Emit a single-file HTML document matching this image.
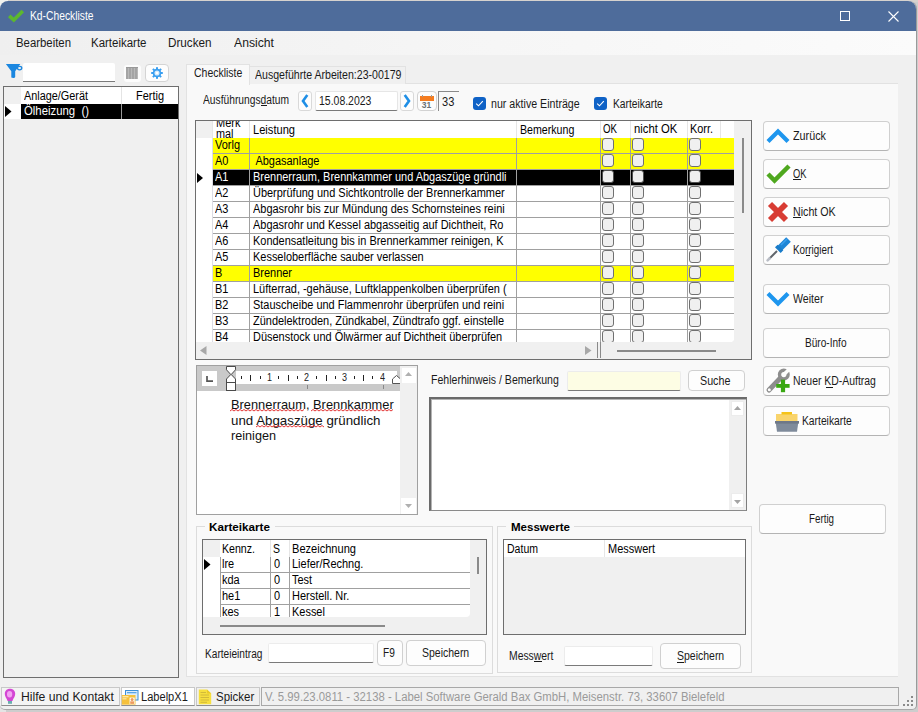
<!DOCTYPE html><html><head><meta charset="utf-8"><style>
*{margin:0;padding:0;box-sizing:border-box}
html,body{width:918px;height:712px;overflow:hidden;background:#e9e9e9;font-family:"Liberation Sans",sans-serif}
div{position:absolute}
.t{white-space:pre}
svg{position:absolute;overflow:visible}
</style></head><body>
<div style="left:0;top:0;width:918px;height:712px;background:#cdcdcd"></div>
<div style="left:0;top:0;width:918px;height:2px;background:#d6d2ce"></div>
<div style="left:0;top:0;width:8px;height:10px;background:#f2f2ee"></div>
<div style="left:0;top:690px;width:6px;height:22px;background:#e4e4e4"></div>
<div style="left:0px;top:1px;width:917px;height:709px;background:#f0f0f0;border-radius:8px 8px 5px 5px;border-right:1px solid #9a9a9a;border-bottom:1px solid #a8a8a8;overflow:hidden"></div>
<div style="left:0px;top:1px;width:916px;height:30px;background:#4e6c9b;border-radius:8px 8px 0 0"></div>
<svg style="left:8px;top:9px" width="16" height="13" viewBox="0 0 16 13"><path d="M1.2 6.8 L5.8 11 L14.8 2" fill="none" stroke="#5cb82e" stroke-width="3.6" stroke-linejoin="miter"/></svg>
<div class="t" style="left:29.50px;top:8.44px;font-size:12px;line-height:16.80px;color:#ffffff;font-weight:400;transform:scaleX(0.8576);transform-origin:0 0;">Kd-Checkliste</div>
<div style="left:840px;top:11px;width:10px;height:10px;border:1px solid #fff"></div>
<svg style="left:888px;top:11px" width="11" height="11" viewBox="0 0 11 11"><path d="M0.5 0.5 L10.5 10.5 M10.5 0.5 L0.5 10.5" stroke="#fff" stroke-width="1.1"/></svg>
<div style="left:0px;top:31px;width:916px;height:24px;background:linear-gradient(90deg,#efefef 0%,#f5f5f5 45%,#fbfbfb 100%)"></div>
<div class="t" style="left:15.80px;top:35.04px;font-size:12px;line-height:16.80px;color:#1a1a1a;font-weight:400;transform:scaleX(0.9475);transform-origin:0 0;">Bearbeiten</div>
<div class="t" style="left:90.50px;top:35.04px;font-size:12px;line-height:16.80px;color:#1a1a1a;font-weight:400;transform:scaleX(0.9566);transform-origin:0 0;">Karteikarte</div>
<div class="t" style="left:168.20px;top:35.04px;font-size:12px;line-height:16.80px;color:#1a1a1a;font-weight:400;transform:scaleX(0.9760);transform-origin:0 0;">Drucken</div>
<div class="t" style="left:234.00px;top:35.04px;font-size:12px;line-height:16.80px;color:#1a1a1a;font-weight:400;transform:scaleX(1.0163);transform-origin:0 0;">Ansicht</div>
<svg style="left:4px;top:62px" width="20" height="18" viewBox="0 0 20 18"><path d="M1.9 1.9 H16.3 L11.2 9.3 V15 Q10.8 16.2 9.2 16 L7.3 15.6 V9.3 Z" fill="#1b87e0"/><ellipse cx="15.6" cy="6.1" rx="2.2" ry="1.7" fill="none" stroke="#1b87e0" stroke-width="1.3"/></svg>
<div style="left:23px;top:63px;width:92px;height:19px;background:#fff;border-bottom:1px solid #7a7a7a;border-radius:2px 2px 0 0"></div>
<div style="left:124px;top:65px;width:17px;height:17px;background:#fcfcfc;border-radius:3px"></div>
<div style="left:126px;top:67px;width:12px;height:12px;background:repeating-linear-gradient(90deg,#a4a4a4 0 2px,#b8b8b8 2px 3px);border-top:1px solid #999"></div>
<div style="left:145px;top:64px;width:24px;height:18px;background:#fdfdfd;border:1px solid #d4d4d4;border-radius:4px"></div>
<svg style="left:151px;top:67px" width="12" height="12" viewBox="-6 -6 12 12"><rect x="-1" y="-5.8" width="2" height="2.4" fill="#3a9ff0" transform="rotate(0)"/><rect x="-1" y="-5.8" width="2" height="2.4" fill="#3a9ff0" transform="rotate(45)"/><rect x="-1" y="-5.8" width="2" height="2.4" fill="#3a9ff0" transform="rotate(90)"/><rect x="-1" y="-5.8" width="2" height="2.4" fill="#3a9ff0" transform="rotate(135)"/><rect x="-1" y="-5.8" width="2" height="2.4" fill="#3a9ff0" transform="rotate(180)"/><rect x="-1" y="-5.8" width="2" height="2.4" fill="#3a9ff0" transform="rotate(225)"/><rect x="-1" y="-5.8" width="2" height="2.4" fill="#3a9ff0" transform="rotate(270)"/><rect x="-1" y="-5.8" width="2" height="2.4" fill="#3a9ff0" transform="rotate(315)"/><circle cx="0" cy="0" r="3.4" fill="#d6eafb" stroke="#3a9ff0" stroke-width="1.7"/><circle cx="0" cy="0" r="1.3" fill="#fff"/></svg>
<div style="left:3px;top:86px;width:176px;height:592px;background:#f0f0f0;border:1px solid #6e6e6e"></div>
<div style="left:4px;top:87px;width:174px;height:17px;background:#fff"></div>
<div style="left:4px;top:87px;width:17px;height:17px;background:#f0f0f0"></div>
<div style="left:4px;top:104px;width:17px;height:15px;background:#fff"></div>
<div style="left:121px;top:87px;width:1px;height:17px;background:#e4e4e4"></div>
<div class="t" style="left:23.60px;top:87.72px;font-size:12.5px;line-height:17.50px;color:#000;font-weight:400;transform:scaleX(0.8689);transform-origin:0 0;">Anlage/Gerät</div>
<div class="t" style="left:135.90px;top:87.72px;font-size:12.5px;line-height:17.50px;color:#000;font-weight:400;transform:scaleX(0.8759);transform-origin:0 0;">Fertig</div>
<div style="left:21px;top:104px;width:157px;height:15px;background:#000"></div>
<div style="left:121px;top:104px;width:1px;height:15px;background:#9a9a9a"></div>
<div class="t" style="left:23.60px;top:102.72px;font-size:12.5px;line-height:17.50px;color:#fff;font-weight:400;transform:scaleX(0.9083);transform-origin:0 0;">Ölheizung  ()</div>
<svg style="left:5px;top:106px" width="7" height="11" viewBox="0 0 7 11"><path d="M0 0 L6.5 5.5 L0 11 Z" fill="#000"/></svg>
<div style="left:186px;top:83px;width:712px;height:594px;background:#f9f9f9;border-top:1px solid #e2e2e2;border-left:1px solid #e2e2e2;border-bottom:1px solid #e2e2e2"></div>
<div style="left:186px;top:64px;width:64px;height:21px;background:#f9f9f9;border:1px solid #e2e2e2;border-bottom:none"></div>
<div class="t" style="left:193.60px;top:64.84px;font-size:12px;line-height:16.80px;color:#1a1a1a;font-weight:400;transform:scaleX(0.8726);transform-origin:0 0;">Checkliste</div>
<div style="left:250px;top:66px;width:156px;height:18px;background:#f0f0f0;border:1px solid #e2e2e2;border-bottom:none;border-left:none"></div>
<div class="t" style="left:255.30px;top:67.24px;font-size:12px;line-height:16.80px;color:#1a1a1a;font-weight:400;transform:scaleX(0.8818);transform-origin:0 0;">Ausgeführte Arbeiten:23-00179</div>
<div class="t" style="left:202.60px;top:92.14px;font-size:12px;line-height:16.80px;color:#1a1a1a;font-weight:400;transform:scaleX(0.8537);transform-origin:0 0;">Ausführungsdatum</div>
<div style="left:261px;top:105px;width:6px;height:1px;background:#1a1a1a"></div>
<div style="left:298px;top:91px;width:14px;height:20px;background:#fdfdfd;border:1px solid #d9d9d9;border-radius:3px"></div>
<svg style="left:301px;top:94px" width="8" height="14" viewBox="0 0 8 14"><path d="M6.3 1 L2 7 L6.3 13" fill="none" stroke="#1f8fe6" stroke-width="2.6"/></svg>
<div style="left:315px;top:91px;width:83px;height:20px;background:#fff;border:1px solid #e6e6e6;border-bottom:1px solid #7a7a7a;border-radius:2px"></div>
<div class="t" style="left:319.00px;top:93.24px;font-size:12px;line-height:16.80px;color:#1a1a1a;font-weight:400;transform:scaleX(0.8725);transform-origin:0 0;">15.08.2023</div>
<div style="left:400px;top:91px;width:14px;height:20px;background:#fdfdfd;border:1px solid #d9d9d9;border-radius:3px"></div>
<svg style="left:403px;top:94px" width="8" height="14" viewBox="0 0 8 14"><path d="M1.7 1 L6 7 L1.7 13" fill="none" stroke="#1f8fe6" stroke-width="2.6"/></svg>
<div style="left:417px;top:91px;width:20px;height:20px;background:#fdfdfd;border:1px solid #d2d2d2;border-radius:4px"></div>
<div style="left:420px;top:96px;width:14px;height:5px;background:#f57c1f"></div>
<div style="left:422px;top:95px;width:1px;height:2px;background:#9a9a9a"></div>
<div style="left:431px;top:95px;width:1px;height:2px;background:#9a9a9a"></div>
<div class="t" style="left:421.80px;top:99.90px;font-size:8.5px;line-height:11.90px;color:#6a7075;font-weight:700;">31</div>
<div style="left:438px;top:91px;width:21px;height:20px;background:#f9f9f9;border-left:1px solid #8a8a8a;border-top:1px solid #8a8a8a"></div>
<div class="t" style="left:441.70px;top:93.72px;font-size:12.5px;line-height:17.50px;color:#1a1a1a;font-weight:400;transform:scaleX(0.8845);transform-origin:0 0;">33</div>
<div style="left:473px;top:97px;width:13px;height:13px;background:#0f62c6;border-radius:3px"></div>
<svg style="left:475px;top:99px" width="9" height="9" viewBox="0 0 9 9"><path d="M1.2 4.6 L3.5 6.8 L7.8 2.2" fill="none" stroke="#fff" stroke-width="1.1"/></svg>
<div style="left:594px;top:97px;width:13px;height:13px;background:#0f62c6;border-radius:3px"></div>
<svg style="left:596px;top:99px" width="9" height="9" viewBox="0 0 9 9"><path d="M1.2 4.6 L3.5 6.8 L7.8 2.2" fill="none" stroke="#fff" stroke-width="1.1"/></svg>
<div class="t" style="left:491.30px;top:96.14px;font-size:12px;line-height:16.80px;color:#1a1a1a;font-weight:400;transform:scaleX(0.8866);transform-origin:0 0;">nur aktive Einträge</div>
<div class="t" style="left:613.30px;top:96.14px;font-size:12px;line-height:16.80px;color:#1a1a1a;font-weight:400;transform:scaleX(0.8566);transform-origin:0 0;">Karteikarte</div>
<div style="left:195px;top:120px;width:557px;height:240px;background:#f0f0f0;border:1px solid #6e6e6e"></div>
<div style="left:196px;top:121px;width:538px;height:17px;background:#fff"></div>
<div style="left:196px;top:121px;width:17px;height:17px;background:#f0f0f0"></div>
<div style="left:196px;top:138px;width:538px;height:204px;background:#fff;border-radius:0 0 4px 0"></div>
<div style="left:196px;top:138px;width:538px;height:204px;overflow:hidden;border-radius:0 0 4px 0">
<div style="left:17px;top:0px;width:521px;height:15px;background:#ffff00"></div>
<div style="left:17px;top:15px;width:521px;height:1px;background:#a0a0a0"></div>
<div class="t" style="left:19.00px;top:-1.48px;font-size:12.5px;line-height:17.50px;color:#000;font-weight:400;transform:scaleX(0.8770);transform-origin:0 0;">Vorlg</div>
<div class="t" style="left:56.50px;top:-1.48px;font-size:12.5px;line-height:17.50px;color:#000;font-weight:400;transform:scaleX(0.8770);transform-origin:0 0;overflow:hidden;width:298.75px;"></div>
<div style="left:406px;top:0px;width:12px;height:13px;background:#f0f0f0;border:1px solid #707070;border-radius:3px"></div>
<div style="left:436px;top:0px;width:12px;height:13px;background:#f0f0f0;border:1px solid #707070;border-radius:3px"></div>
<div style="left:493px;top:0px;width:12px;height:13px;background:#f0f0f0;border:1px solid #707070;border-radius:3px"></div>
<div style="left:17px;top:16px;width:521px;height:15px;background:#ffff00"></div>
<div style="left:17px;top:31px;width:521px;height:1px;background:#a0a0a0"></div>
<div class="t" style="left:19.00px;top:14.52px;font-size:12.5px;line-height:17.50px;color:#000;font-weight:400;transform:scaleX(0.8770);transform-origin:0 0;">A0</div>
<div class="t" style="left:56.50px;top:14.52px;font-size:12.5px;line-height:17.50px;color:#000;font-weight:400;transform:scaleX(0.8770);transform-origin:0 0;overflow:hidden;width:298.75px;"> Abgasanlage</div>
<div style="left:406px;top:16px;width:12px;height:13px;background:#f0f0f0;border:1px solid #707070;border-radius:3px"></div>
<div style="left:436px;top:16px;width:12px;height:13px;background:#f0f0f0;border:1px solid #707070;border-radius:3px"></div>
<div style="left:493px;top:16px;width:12px;height:13px;background:#f0f0f0;border:1px solid #707070;border-radius:3px"></div>
<div style="left:17px;top:32px;width:521px;height:15px;background:#000"></div>
<div style="left:17px;top:47px;width:521px;height:1px;background:#a0a0a0"></div>
<div class="t" style="left:19.00px;top:30.52px;font-size:12.5px;line-height:17.50px;color:#fff;font-weight:400;transform:scaleX(0.8770);transform-origin:0 0;">A1</div>
<div class="t" style="left:56.50px;top:30.52px;font-size:12.5px;line-height:17.50px;color:#fff;font-weight:400;transform:scaleX(0.8770);transform-origin:0 0;overflow:hidden;width:298.75px;">Brennerraum, Brennkammer und Abgaszüge gründli</div>
<div style="left:406px;top:32px;width:12px;height:13px;background:#f0f0f0;border:1px solid #505050;border-radius:3px"></div>
<div style="left:436px;top:32px;width:12px;height:13px;background:#f0f0f0;border:1px solid #505050;border-radius:3px"></div>
<div style="left:493px;top:32px;width:12px;height:13px;background:#f0f0f0;border:1px solid #505050;border-radius:3px"></div>
<svg style="left:1px;top:35px" width="7" height="10" viewBox="0 0 7 10"><path d="M0 0 L6 5 L0 10 Z" fill="#000"/></svg>
<div style="left:17px;top:48px;width:521px;height:15px;background:#fff"></div>
<div style="left:17px;top:63px;width:521px;height:1px;background:#a0a0a0"></div>
<div class="t" style="left:19.00px;top:46.52px;font-size:12.5px;line-height:17.50px;color:#000;font-weight:400;transform:scaleX(0.8770);transform-origin:0 0;">A2</div>
<div class="t" style="left:56.50px;top:46.52px;font-size:12.5px;line-height:17.50px;color:#000;font-weight:400;transform:scaleX(0.8770);transform-origin:0 0;overflow:hidden;width:298.75px;">Überprüfung und Sichtkontrolle der Brennerkammer</div>
<div style="left:406px;top:48px;width:12px;height:13px;background:#f0f0f0;border:1px solid #707070;border-radius:3px"></div>
<div style="left:436px;top:48px;width:12px;height:13px;background:#f0f0f0;border:1px solid #707070;border-radius:3px"></div>
<div style="left:493px;top:48px;width:12px;height:13px;background:#f0f0f0;border:1px solid #707070;border-radius:3px"></div>
<div style="left:17px;top:64px;width:521px;height:15px;background:#fff"></div>
<div style="left:17px;top:79px;width:521px;height:1px;background:#a0a0a0"></div>
<div class="t" style="left:19.00px;top:62.52px;font-size:12.5px;line-height:17.50px;color:#000;font-weight:400;transform:scaleX(0.8770);transform-origin:0 0;">A3</div>
<div class="t" style="left:56.50px;top:62.52px;font-size:12.5px;line-height:17.50px;color:#000;font-weight:400;transform:scaleX(0.8770);transform-origin:0 0;overflow:hidden;width:298.75px;">Abgasrohr bis zur Mündung des Schornsteines reini</div>
<div style="left:406px;top:64px;width:12px;height:13px;background:#f0f0f0;border:1px solid #707070;border-radius:3px"></div>
<div style="left:436px;top:64px;width:12px;height:13px;background:#f0f0f0;border:1px solid #707070;border-radius:3px"></div>
<div style="left:493px;top:64px;width:12px;height:13px;background:#f0f0f0;border:1px solid #707070;border-radius:3px"></div>
<div style="left:17px;top:80px;width:521px;height:15px;background:#fff"></div>
<div style="left:17px;top:95px;width:521px;height:1px;background:#a0a0a0"></div>
<div class="t" style="left:19.00px;top:78.52px;font-size:12.5px;line-height:17.50px;color:#000;font-weight:400;transform:scaleX(0.8770);transform-origin:0 0;">A4</div>
<div class="t" style="left:56.50px;top:78.52px;font-size:12.5px;line-height:17.50px;color:#000;font-weight:400;transform:scaleX(0.8770);transform-origin:0 0;overflow:hidden;width:298.75px;">Abgasrohr und Kessel abgasseitig auf Dichtheit, Ro</div>
<div style="left:406px;top:80px;width:12px;height:13px;background:#f0f0f0;border:1px solid #707070;border-radius:3px"></div>
<div style="left:436px;top:80px;width:12px;height:13px;background:#f0f0f0;border:1px solid #707070;border-radius:3px"></div>
<div style="left:493px;top:80px;width:12px;height:13px;background:#f0f0f0;border:1px solid #707070;border-radius:3px"></div>
<div style="left:17px;top:96px;width:521px;height:15px;background:#fff"></div>
<div style="left:17px;top:111px;width:521px;height:1px;background:#a0a0a0"></div>
<div class="t" style="left:19.00px;top:94.52px;font-size:12.5px;line-height:17.50px;color:#000;font-weight:400;transform:scaleX(0.8770);transform-origin:0 0;">A6</div>
<div class="t" style="left:56.50px;top:94.52px;font-size:12.5px;line-height:17.50px;color:#000;font-weight:400;transform:scaleX(0.8770);transform-origin:0 0;overflow:hidden;width:298.75px;">Kondensatleitung bis in Brennerkammer reinigen, K</div>
<div style="left:406px;top:96px;width:12px;height:13px;background:#f0f0f0;border:1px solid #707070;border-radius:3px"></div>
<div style="left:436px;top:96px;width:12px;height:13px;background:#f0f0f0;border:1px solid #707070;border-radius:3px"></div>
<div style="left:493px;top:96px;width:12px;height:13px;background:#f0f0f0;border:1px solid #707070;border-radius:3px"></div>
<div style="left:17px;top:112px;width:521px;height:15px;background:#fff"></div>
<div style="left:17px;top:127px;width:521px;height:1px;background:#a0a0a0"></div>
<div class="t" style="left:19.00px;top:110.52px;font-size:12.5px;line-height:17.50px;color:#000;font-weight:400;transform:scaleX(0.8770);transform-origin:0 0;">A5</div>
<div class="t" style="left:56.50px;top:110.52px;font-size:12.5px;line-height:17.50px;color:#000;font-weight:400;transform:scaleX(0.8770);transform-origin:0 0;overflow:hidden;width:298.75px;">Kesseloberfläche sauber verlassen</div>
<div style="left:406px;top:112px;width:12px;height:13px;background:#f0f0f0;border:1px solid #707070;border-radius:3px"></div>
<div style="left:436px;top:112px;width:12px;height:13px;background:#f0f0f0;border:1px solid #707070;border-radius:3px"></div>
<div style="left:493px;top:112px;width:12px;height:13px;background:#f0f0f0;border:1px solid #707070;border-radius:3px"></div>
<div style="left:17px;top:128px;width:521px;height:15px;background:#ffff00"></div>
<div style="left:17px;top:143px;width:521px;height:1px;background:#a0a0a0"></div>
<div class="t" style="left:19.00px;top:126.52px;font-size:12.5px;line-height:17.50px;color:#000;font-weight:400;transform:scaleX(0.8770);transform-origin:0 0;">B</div>
<div class="t" style="left:56.50px;top:126.52px;font-size:12.5px;line-height:17.50px;color:#000;font-weight:400;transform:scaleX(0.8770);transform-origin:0 0;overflow:hidden;width:298.75px;">Brenner</div>
<div style="left:406px;top:128px;width:12px;height:13px;background:#f0f0f0;border:1px solid #707070;border-radius:3px"></div>
<div style="left:436px;top:128px;width:12px;height:13px;background:#f0f0f0;border:1px solid #707070;border-radius:3px"></div>
<div style="left:493px;top:128px;width:12px;height:13px;background:#f0f0f0;border:1px solid #707070;border-radius:3px"></div>
<div style="left:17px;top:144px;width:521px;height:15px;background:#fff"></div>
<div style="left:17px;top:159px;width:521px;height:1px;background:#a0a0a0"></div>
<div class="t" style="left:19.00px;top:142.52px;font-size:12.5px;line-height:17.50px;color:#000;font-weight:400;transform:scaleX(0.8770);transform-origin:0 0;">B1</div>
<div class="t" style="left:56.50px;top:142.52px;font-size:12.5px;line-height:17.50px;color:#000;font-weight:400;transform:scaleX(0.8770);transform-origin:0 0;overflow:hidden;width:298.75px;">Lüfterrad, -gehäuse, Luftklappenkolben überprüfen (</div>
<div style="left:406px;top:144px;width:12px;height:13px;background:#f0f0f0;border:1px solid #707070;border-radius:3px"></div>
<div style="left:436px;top:144px;width:12px;height:13px;background:#f0f0f0;border:1px solid #707070;border-radius:3px"></div>
<div style="left:493px;top:144px;width:12px;height:13px;background:#f0f0f0;border:1px solid #707070;border-radius:3px"></div>
<div style="left:17px;top:160px;width:521px;height:15px;background:#fff"></div>
<div style="left:17px;top:175px;width:521px;height:1px;background:#a0a0a0"></div>
<div class="t" style="left:19.00px;top:158.52px;font-size:12.5px;line-height:17.50px;color:#000;font-weight:400;transform:scaleX(0.8770);transform-origin:0 0;">B2</div>
<div class="t" style="left:56.50px;top:158.52px;font-size:12.5px;line-height:17.50px;color:#000;font-weight:400;transform:scaleX(0.8770);transform-origin:0 0;overflow:hidden;width:298.75px;">Stauscheibe und Flammenrohr überprüfen und reini</div>
<div style="left:406px;top:160px;width:12px;height:13px;background:#f0f0f0;border:1px solid #707070;border-radius:3px"></div>
<div style="left:436px;top:160px;width:12px;height:13px;background:#f0f0f0;border:1px solid #707070;border-radius:3px"></div>
<div style="left:493px;top:160px;width:12px;height:13px;background:#f0f0f0;border:1px solid #707070;border-radius:3px"></div>
<div style="left:17px;top:176px;width:521px;height:15px;background:#fff"></div>
<div style="left:17px;top:191px;width:521px;height:1px;background:#a0a0a0"></div>
<div class="t" style="left:19.00px;top:174.52px;font-size:12.5px;line-height:17.50px;color:#000;font-weight:400;transform:scaleX(0.8770);transform-origin:0 0;">B3</div>
<div class="t" style="left:56.50px;top:174.52px;font-size:12.5px;line-height:17.50px;color:#000;font-weight:400;transform:scaleX(0.8770);transform-origin:0 0;overflow:hidden;width:298.75px;">Zündelektroden, Zündkabel, Zündtrafo ggf. einstelle</div>
<div style="left:406px;top:176px;width:12px;height:13px;background:#f0f0f0;border:1px solid #707070;border-radius:3px"></div>
<div style="left:436px;top:176px;width:12px;height:13px;background:#f0f0f0;border:1px solid #707070;border-radius:3px"></div>
<div style="left:493px;top:176px;width:12px;height:13px;background:#f0f0f0;border:1px solid #707070;border-radius:3px"></div>
<div style="left:17px;top:192px;width:521px;height:15px;background:#fff"></div>
<div style="left:17px;top:207px;width:521px;height:1px;background:#a0a0a0"></div>
<div class="t" style="left:19.00px;top:190.52px;font-size:12.5px;line-height:17.50px;color:#000;font-weight:400;transform:scaleX(0.8770);transform-origin:0 0;">B4</div>
<div class="t" style="left:56.50px;top:190.52px;font-size:12.5px;line-height:17.50px;color:#000;font-weight:400;transform:scaleX(0.8770);transform-origin:0 0;overflow:hidden;width:298.75px;">Düsenstock und Ölwärmer auf Dichtheit überprüfen</div>
<div style="left:406px;top:192px;width:12px;height:13px;background:#f0f0f0;border:1px solid #707070;border-radius:3px"></div>
<div style="left:436px;top:192px;width:12px;height:13px;background:#f0f0f0;border:1px solid #707070;border-radius:3px"></div>
<div style="left:493px;top:192px;width:12px;height:13px;background:#f0f0f0;border:1px solid #707070;border-radius:3px"></div>
<div style="left:16px;top:0;width:1px;height:204px;background:#dcdce4"></div>
<div style="left:53px;top:0;width:1px;height:204px;background:#a0a0a0"></div>
<div style="left:320px;top:0;width:1px;height:204px;background:#a0a0a0"></div>
<div style="left:404px;top:0;width:1px;height:204px;background:#a0a0a0"></div>
<div style="left:434px;top:0;width:1px;height:204px;background:#a0a0a0"></div>
<div style="left:491px;top:0;width:1px;height:204px;background:#a0a0a0"></div>
</div>
<div style="left:212px;top:121px;width:1px;height:17px;background:#e6e6e6"></div>
<div style="left:249px;top:121px;width:1px;height:17px;background:#e6e6e6"></div>
<div style="left:516px;top:121px;width:1px;height:17px;background:#e6e6e6"></div>
<div style="left:600px;top:121px;width:1px;height:17px;background:#e6e6e6"></div>
<div style="left:630px;top:121px;width:1px;height:17px;background:#e6e6e6"></div>
<div style="left:687px;top:121px;width:1px;height:17px;background:#e6e6e6"></div>
<div style="left:720px;top:121px;width:1px;height:17px;background:#e6e6e6"></div>
<div class="t" style="left:215.70px;top:114.72px;font-size:12.5px;line-height:17.50px;color:#000;font-weight:400;transform:scaleX(0.8809);transform-origin:0 0;">Merk</div>
<div class="t" style="left:215.70px;top:125.72px;font-size:12.5px;line-height:17.50px;color:#000;font-weight:400;transform:scaleX(0.8682);transform-origin:0 0;">mal</div>
<div style="left:213px;top:112px;width:36px;height:8px;background:#f9f9f9"></div>
<div style="left:213px;top:120px;width:36px;height:1px;background:#6e6e6e"></div>
<div style="left:196px;top:121px;width:538px;height:17px;overflow:hidden">
</div>
<div class="t" style="left:252.60px;top:121.62px;font-size:12.5px;line-height:17.50px;color:#000;font-weight:400;transform:scaleX(0.8889);transform-origin:0 0;">Leistung</div>
<div class="t" style="left:519.90px;top:121.62px;font-size:12.5px;line-height:17.50px;color:#000;font-weight:400;transform:scaleX(0.8493);transform-origin:0 0;">Bemerkung</div>
<div class="t" style="left:603.30px;top:121.32px;font-size:12.5px;line-height:17.50px;color:#000;font-weight:400;transform:scaleX(0.7751);transform-origin:0 0;">OK</div>
<div class="t" style="left:633.50px;top:121.32px;font-size:12.5px;line-height:17.50px;color:#000;font-weight:400;transform:scaleX(0.9012);transform-origin:0 0;">nicht OK</div>
<div class="t" style="left:690.00px;top:121.32px;font-size:12.5px;line-height:17.50px;color:#000;font-weight:400;transform:scaleX(0.8710);transform-origin:0 0;">Korr.</div>
<div style="left:734px;top:121px;width:17px;height:237px;background:#f0f0f0"></div>
<div style="left:742px;top:138px;width:2px;height:75px;background:#8a8a8a"></div>
<div style="left:196px;top:342px;width:538px;height:16px;background:#f0f0f0"></div>
<svg style="left:200px;top:346px" width="7" height="9" viewBox="0 0 7 9"><path d="M6.5 0 L0 4.5 L6.5 9 Z" fill="#a8a8a8"/></svg>
<svg style="left:585px;top:346px" width="7" height="9" viewBox="0 0 7 9"><path d="M0 0 L6.5 4.5 L0 9 Z" fill="#a8a8a8"/></svg>
<div style="left:597px;top:342px;width:1px;height:16px;background:#8a8a8a"></div>
<div style="left:600px;top:342px;width:1px;height:16px;background:#8a8a8a"></div>
<div style="left:617px;top:350px;width:99px;height:2px;background:#8a8a8a"></div>
<div style="left:196px;top:365px;width:222px;height:150px;background:#fff;border:1px solid #a0a0a0"></div>
<div style="left:197px;top:366px;width:203px;height:25px;background:#c9c9c9"></div>
<div style="left:236px;top:371px;width:161px;height:13px;background:#fff"></div>
<div style="left:202px;top:371px;width:15px;height:15px;background:#fff"></div>
<svg style="left:206px;top:376px" width="8" height="8" viewBox="0 0 8 8"><path d="M1 0 V5.2 H7" fill="none" stroke="#555" stroke-width="1.7"/></svg>
<svg style="left:226px;top:366px" width="10" height="25" viewBox="0 0 10 25"><path d="M0.5 0.5 H9.5 V3.8 L5.2 8.5 L9.5 13 V16.5 H0.5 V13 L4.8 8.5 L0.5 3.8 Z" fill="#fff" stroke="#4a4a4a" stroke-width="1"/><rect x="0.5" y="16.5" width="9" height="8" fill="#fff" stroke="#4a4a4a" stroke-width="1"/></svg>
<div style="left:241px;top:376px;width:1px;height:3px;background:#222"></div>
<div style="left:250px;top:375px;width:1px;height:6px;background:#222"></div>
<div style="left:260px;top:376px;width:1px;height:3px;background:#222"></div>
<div class="t" style="left:266.80px;top:371.33px;font-size:10px;line-height:14.00px;color:#222;font-weight:400;transform:scaleX(0.9009);transform-origin:0 0;">1</div>
<div style="left:278px;top:376px;width:1px;height:3px;background:#222"></div>
<div style="left:288px;top:375px;width:1px;height:6px;background:#222"></div>
<div style="left:297px;top:376px;width:1px;height:3px;background:#222"></div>
<div class="t" style="left:304.40px;top:371.33px;font-size:10px;line-height:14.00px;color:#222;font-weight:400;transform:scaleX(0.9009);transform-origin:0 0;">2</div>
<div style="left:316px;top:376px;width:1px;height:3px;background:#222"></div>
<div style="left:326px;top:375px;width:1px;height:6px;background:#222"></div>
<div style="left:335px;top:376px;width:1px;height:3px;background:#222"></div>
<div class="t" style="left:342.00px;top:371.33px;font-size:10px;line-height:14.00px;color:#222;font-weight:400;transform:scaleX(0.9009);transform-origin:0 0;">3</div>
<div style="left:354px;top:376px;width:1px;height:3px;background:#222"></div>
<div style="left:363px;top:375px;width:1px;height:6px;background:#222"></div>
<div style="left:372px;top:376px;width:1px;height:3px;background:#222"></div>
<div class="t" style="left:379.60px;top:371.33px;font-size:10px;line-height:14.00px;color:#222;font-weight:400;transform:scaleX(0.9009);transform-origin:0 0;">4</div>
<div style="left:307px;top:385px;width:1px;height:4px;background:#888"></div>
<div style="left:383px;top:385px;width:1px;height:4px;background:#888"></div>
<svg style="left:392px;top:375px" width="9" height="9" viewBox="0 0 9 9"><path d="M0.5 8.5 V4 L4.5 0.5 L8.5 4 V8.5 Z" fill="#fff" stroke="#555" stroke-width="1"/></svg>
<div style="left:400px;top:366px;width:17px;height:148px;background:#f0f0f0"></div>
<div style="left:402px;top:368px;width:14px;height:15px;background:#fff"></div>
<div style="left:401px;top:498px;width:15px;height:16px;background:#fff"></div>
<svg style="left:405px;top:372px" width="7" height="4" viewBox="0 0 7 4"><path d="M0 4 L3.5 0 L7 4 Z" fill="#b0b0b0"/></svg>
<svg style="left:405px;top:504px" width="7" height="4" viewBox="0 0 7 4"><path d="M0 0 L3.5 4 L7 0 Z" fill="#b0b0b0"/></svg>
<div class="t" style="left:230.50px;top:395.70px;font-size:13px;line-height:18.20px;color:#111;font-weight:400;transform:scaleX(0.9876);transform-origin:0 0;">Brennerraum, Brennkammer</div>
<div class="t" style="left:230.50px;top:411.60px;font-size:13px;line-height:18.20px;color:#111;font-weight:400;transform:scaleX(1.0238);transform-origin:0 0;">und Abgaszüge gründlich</div>
<div class="t" style="left:230.50px;top:427.10px;font-size:13px;line-height:18.20px;color:#111;font-weight:400;transform:scaleX(0.9730);transform-origin:0 0;">reinigen</div>
<svg style="left:0;top:0" width="918" height="712"><path d="M230.0 411.0 L232.0 409.5 L234.0 411.0 L236.0 409.5 L238.0 411.0 L240.0 409.5 L242.0 411.0 L244.0 409.5 L246.0 411.0 L248.0 409.5 L250.0 411.0 L252.0 409.5 L254.0 411.0 L256.0 409.5 L258.0 411.0 L260.0 409.5 L262.0 411.0 L264.0 409.5 L266.0 411.0 L268.0 409.5 L270.0 411.0 L272.0 409.5 L274.0 411.0 L276.0 409.5 L278.0 411.0 L280.0 409.5 L282.0 411.0 L284.0 409.5 L286.0 411.0 L288.0 409.5 L290.0 411.0 L292.0 409.5 L294.0 411.0 L296.0 409.5 L298.0 411.0 L300.0 409.5 L302.0 411.0 L304.0 409.5" fill="none" stroke="#e02020" stroke-width="0.9"/></svg>
<svg style="left:0;top:0" width="918" height="712"><path d="M311.0 411.0 L313.0 409.5 L315.0 411.0 L317.0 409.5 L319.0 411.0 L321.0 409.5 L323.0 411.0 L325.0 409.5 L327.0 411.0 L329.0 409.5 L331.0 411.0 L333.0 409.5 L335.0 411.0 L337.0 409.5 L339.0 411.0 L341.0 409.5 L343.0 411.0 L345.0 409.5 L347.0 411.0 L349.0 409.5 L351.0 411.0 L353.0 409.5 L355.0 411.0 L357.0 409.5 L359.0 411.0 L361.0 409.5 L363.0 411.0 L365.0 409.5 L367.0 411.0 L369.0 409.5 L371.0 411.0 L373.0 409.5 L375.0 411.0 L377.0 409.5 L379.0 411.0 L381.0 409.5 L383.0 411.0 L385.0 409.5 L387.0 411.0 L389.0 409.5 L391.0 411.0 L393.0 409.5" fill="none" stroke="#e02020" stroke-width="0.9"/></svg>
<svg style="left:0;top:0" width="918" height="712"><path d="M256.0 427.0 L258.0 425.5 L260.0 427.0 L262.0 425.5 L264.0 427.0 L266.0 425.5 L268.0 427.0 L270.0 425.5 L272.0 427.0 L274.0 425.5 L276.0 427.0 L278.0 425.5 L280.0 427.0 L282.0 425.5 L284.0 427.0 L286.0 425.5 L288.0 427.0 L290.0 425.5 L292.0 427.0 L294.0 425.5 L296.0 427.0 L298.0 425.5 L300.0 427.0 L302.0 425.5 L304.0 427.0 L306.0 425.5 L308.0 427.0 L310.0 425.5 L312.0 427.0 L314.0 425.5 L316.0 427.0 L318.0 425.5 L320.0 427.0 L322.0 425.5 L324.0 427.0" fill="none" stroke="#e02020" stroke-width="0.9"/></svg>
<div class="t" style="left:431.40px;top:371.84px;font-size:12px;line-height:16.80px;color:#1a1a1a;font-weight:400;transform:scaleX(0.8789);transform-origin:0 0;">Fehlerhinweis / Bemerkung</div>
<div style="left:567px;top:371px;width:114px;height:20px;background:#fdfde4;border:1px solid #ececec;border-bottom:1px solid #7a7a7a;border-radius:2px"></div>
<div style="left:688px;top:370px;width:57px;height:21px;background:#fdfdfd;border:1px solid #d0d0d0;border-radius:4px"></div>
<div class="t" style="left:699.90px;top:373.14px;font-size:12px;line-height:16.80px;color:#1a1a1a;font-weight:400;transform:scaleX(0.8936);transform-origin:0 0;">Suche</div>
<div style="left:429px;top:397px;width:318px;height:114px;background:#fff;border-top:2px solid #6a6a6a;border-left:2px solid #6a6a6a;border-right:1px solid #7e7e7e;border-bottom:1px solid #8a8a8a;box-shadow:inset 1px 1px 0 #b4b4b4"></div>
<div style="left:729px;top:400px;width:17px;height:110px;background:#f0f0f0"></div>
<div style="left:731px;top:401px;width:13px;height:15px;background:#fff;border:1px solid #ececec"></div>
<div style="left:731px;top:493px;width:13px;height:15px;background:#fff;border:1px solid #ececec"></div>
<svg style="left:734px;top:406px" width="7" height="4" viewBox="0 0 7 4"><path d="M0 4 L3.5 0 L7 4 Z" fill="#a4a4a4"/></svg>
<svg style="left:734px;top:500px" width="7" height="4" viewBox="0 0 7 4"><path d="M0 0 L3.5 4 L7 0 Z" fill="#a4a4a4"/></svg>
<div style="left:196px;top:526px;width:297px;height:148px;border:1px solid #dcdcdc"></div>
<div style="left:205px;top:518px;width:70px;height:14px;background:#f9f9f9"></div>
<div class="t" style="left:209.40px;top:519.69px;font-size:11px;line-height:15.40px;color:#000;font-weight:700;transform:scaleX(1.0613);transform-origin:0 0;">Karteikarte</div>
<div style="left:497px;top:526px;width:255px;height:147px;border:1px solid #dcdcdc"></div>
<div style="left:506px;top:518px;width:68px;height:14px;background:#f9f9f9"></div>
<div class="t" style="left:510.70px;top:519.89px;font-size:11px;line-height:15.40px;color:#000;font-weight:700;transform:scaleX(1.0486);transform-origin:0 0;">Messwerte</div>
<div style="left:202px;top:539px;width:285px;height:96px;background:#f0f0f0;border:1px solid #6e6e6e"></div>
<div style="left:203px;top:540px;width:267px;height:77px;background:#fff;border-radius:0 0 4px 0"></div>
<div style="left:203px;top:540px;width:17px;height:17px;background:#f0f0f0"></div>
<div style="left:270px;top:540px;width:1px;height:17px;background:#e6e6e6"></div>
<div style="left:270px;top:557px;width:1px;height:60px;background:#a0a0a0"></div>
<div style="left:289px;top:540px;width:1px;height:17px;background:#e6e6e6"></div>
<div style="left:289px;top:557px;width:1px;height:60px;background:#a0a0a0"></div>
<div style="left:220px;top:557px;width:1px;height:60px;background:#a0a0a0"></div>
<div class="t" style="left:222.10px;top:540.92px;font-size:12.5px;line-height:17.50px;color:#000;font-weight:400;transform:scaleX(0.8482);transform-origin:0 0;">Kennz.</div>
<div class="t" style="left:273.00px;top:540.92px;font-size:12.5px;line-height:17.50px;color:#000;font-weight:400;transform:scaleX(0.8390);transform-origin:0 0;">S</div>
<div class="t" style="left:292.00px;top:540.92px;font-size:12.5px;line-height:17.50px;color:#000;font-weight:400;transform:scaleX(0.8854);transform-origin:0 0;">Bezeichnung</div>
<div style="left:220px;top:572px;width:250px;height:1px;background:#a0a0a0"></div>
<div class="t" style="left:222.10px;top:555.92px;font-size:12.5px;line-height:17.50px;color:#000;font-weight:400;transform:scaleX(0.8770);transform-origin:0 0;">lre</div>
<div class="t" style="left:273.50px;top:555.92px;font-size:12.5px;line-height:17.50px;color:#000;font-weight:400;transform:scaleX(0.8770);transform-origin:0 0;">0</div>
<div class="t" style="left:292.00px;top:555.92px;font-size:12.5px;line-height:17.50px;color:#000;font-weight:400;transform:scaleX(0.8770);transform-origin:0 0;">Liefer/Rechng.</div>
<div style="left:220px;top:588px;width:250px;height:1px;background:#a0a0a0"></div>
<div class="t" style="left:222.10px;top:571.92px;font-size:12.5px;line-height:17.50px;color:#000;font-weight:400;transform:scaleX(0.8770);transform-origin:0 0;">kda</div>
<div class="t" style="left:273.50px;top:571.92px;font-size:12.5px;line-height:17.50px;color:#000;font-weight:400;transform:scaleX(0.8770);transform-origin:0 0;">0</div>
<div class="t" style="left:292.00px;top:571.92px;font-size:12.5px;line-height:17.50px;color:#000;font-weight:400;transform:scaleX(0.8770);transform-origin:0 0;">Test</div>
<div style="left:220px;top:604px;width:250px;height:1px;background:#a0a0a0"></div>
<div class="t" style="left:222.10px;top:587.92px;font-size:12.5px;line-height:17.50px;color:#000;font-weight:400;transform:scaleX(0.8770);transform-origin:0 0;">he1</div>
<div class="t" style="left:273.50px;top:587.92px;font-size:12.5px;line-height:17.50px;color:#000;font-weight:400;transform:scaleX(0.8770);transform-origin:0 0;">0</div>
<div class="t" style="left:292.00px;top:587.92px;font-size:12.5px;line-height:17.50px;color:#000;font-weight:400;transform:scaleX(0.8770);transform-origin:0 0;">Herstell. Nr.</div>
<div class="t" style="left:222.10px;top:603.92px;font-size:12.5px;line-height:17.50px;color:#000;font-weight:400;transform:scaleX(0.8770);transform-origin:0 0;">kes</div>
<div class="t" style="left:273.50px;top:603.92px;font-size:12.5px;line-height:17.50px;color:#000;font-weight:400;transform:scaleX(0.8770);transform-origin:0 0;">1</div>
<div class="t" style="left:292.00px;top:603.92px;font-size:12.5px;line-height:17.50px;color:#000;font-weight:400;transform:scaleX(0.8770);transform-origin:0 0;">Kessel</div>
<svg style="left:204px;top:559px" width="7" height="11" viewBox="0 0 7 11"><path d="M0 0 L6.5 5.5 L0 11 Z" fill="#000"/></svg>
<div style="left:470px;top:540px;width:16px;height:94px;background:#f0f0f0"></div>
<div style="left:477px;top:557px;width:2px;height:17px;background:#8a8a8a"></div>
<div style="left:220px;top:625px;width:165px;height:2px;background:#8a8a8a"></div>
<div class="t" style="left:204.60px;top:645.84px;font-size:12px;line-height:16.80px;color:#1a1a1a;font-weight:400;transform:scaleX(0.8436);transform-origin:0 0;">Karteieintrag</div>
<div style="left:268px;top:643px;width:106px;height:20px;background:#fff;border:1px solid #ececec;border-bottom:1px solid #7a7a7a;border-radius:2px"></div>
<div style="left:377px;top:640px;width:26px;height:26px;background:#fdfdfd;border:1px solid #d0d0d0;border-radius:4px"></div>
<div class="t" style="left:383.40px;top:645.24px;font-size:12px;line-height:16.80px;color:#1a1a1a;font-weight:400;transform:scaleX(0.8423);transform-origin:0 0;">F9</div>
<div style="left:406px;top:640px;width:80px;height:26px;background:#fdfdfd;border:1px solid #d0d0d0;border-radius:4px"></div>
<div class="t" style="left:422.00px;top:645.24px;font-size:12px;line-height:16.80px;color:#1a1a1a;font-weight:400;transform:scaleX(0.8736);transform-origin:0 0;">Speichern</div>
<div style="left:503px;top:539px;width:243px;height:96px;background:#f0f0f0;border:1px solid #6e6e6e"></div>
<div style="left:504px;top:540px;width:241px;height:17px;background:#fff"></div>
<div style="left:604px;top:540px;width:1px;height:17px;background:#e6e6e6"></div>
<div class="t" style="left:507.00px;top:540.72px;font-size:12.5px;line-height:17.50px;color:#000;font-weight:400;transform:scaleX(0.8421);transform-origin:0 0;">Datum</div>
<div class="t" style="left:607.50px;top:540.72px;font-size:12.5px;line-height:17.50px;color:#000;font-weight:400;transform:scaleX(0.8790);transform-origin:0 0;">Messwert</div>
<div class="t" style="left:509.00px;top:647.74px;font-size:12px;line-height:16.80px;color:#1a1a1a;font-weight:400;transform:scaleX(0.8650);transform-origin:0 0;">Messwert</div>
<div style="left:534px;top:661px;width:8px;height:1px;background:#1a1a1a"></div>
<div style="left:564px;top:646px;width:89px;height:20px;background:#fff;border:1px solid #ececec;border-bottom:1px solid #7a7a7a;border-radius:2px"></div>
<div style="left:660px;top:643px;width:81px;height:26px;background:#fdfdfd;border:1px solid #d0d0d0;border-radius:4px"></div>
<div class="t" style="left:677.00px;top:648.24px;font-size:12px;line-height:16.80px;color:#1a1a1a;font-weight:400;transform:scaleX(0.8736);transform-origin:0 0;">Speichern</div>
<div style="left:677px;top:662px;width:7px;height:1px;background:#1a1a1a"></div>
<div style="left:763px;top:121px;width:127px;height:30px;background:#fdfdfd;border:1px solid #d0d0d0;border-bottom-color:#b4b4b4;border-radius:4px"></div>
<div class="t" style="left:792.90px;top:128.04px;font-size:12px;line-height:16.80px;color:#1a1a1a;font-weight:400;transform:scaleX(0.8967);transform-origin:0 0;">Zurück</div>
<svg style="left:766px;top:128px" width="24" height="16" viewBox="0 0 24 16"><path d="M2 13.5 L12 3.5 L22 13.5" fill="none" stroke="#1e96ee" stroke-width="4.2"/></svg>
<div style="left:763px;top:159px;width:127px;height:30px;background:#fdfdfd;border:1px solid #d0d0d0;border-bottom-color:#b4b4b4;border-radius:4px"></div>
<div class="t" style="left:792.60px;top:166.14px;font-size:12px;line-height:16.80px;color:#1a1a1a;font-weight:400;transform:scaleX(0.7785);transform-origin:0 0;">OK</div>
<div style="left:793px;top:179px;width:8px;height:1px;background:#1a1a1a"></div>
<svg style="left:766px;top:163px" width="25" height="21" viewBox="0 0 25 21"><path d="M2 11 L8.5 17.5 L23 3" fill="none" stroke="#4fa81f" stroke-width="4.5"/></svg>
<div style="left:763px;top:197px;width:127px;height:30px;background:#fdfdfd;border:1px solid #d0d0d0;border-bottom-color:#b4b4b4;border-radius:4px"></div>
<div class="t" style="left:793.20px;top:204.04px;font-size:12px;line-height:16.80px;color:#1a1a1a;font-weight:400;transform:scaleX(0.8896);transform-origin:0 0;">Nicht OK</div>
<div style="left:793px;top:217px;width:8px;height:1px;background:#1a1a1a"></div>
<svg style="left:767px;top:201px" width="22" height="22" viewBox="0 0 22 22"><path d="M3 3 L19 19 M19 3 L3 19" stroke="#d83c33" stroke-width="5.8"/></svg>
<div style="left:763px;top:235px;width:127px;height:30px;background:#fdfdfd;border:1px solid #d0d0d0;border-bottom-color:#b4b4b4;border-radius:4px"></div>
<div class="t" style="left:793.20px;top:242.04px;font-size:12px;line-height:16.80px;color:#1a1a1a;font-weight:400;transform:scaleX(0.8215);transform-origin:0 0;">Korrigiert</div>
<div style="left:806px;top:255px;width:4px;height:1px;background:#1a1a1a"></div>
<svg style="left:764px;top:236px" width="30" height="28" viewBox="0 0 30 28"><path d="M13 15 L5 23" stroke="#5f646a" stroke-width="2"/><path d="M5.6 22.4 L3.6 24.4" stroke="#b9bdc6" stroke-width="2.6" stroke-linecap="round"/><path d="M14.5 13.5 L24.5 3.5" stroke="#1f86d6" stroke-width="6.5"/><path d="M13.8 14.2 L16.5 11.5" stroke="#1a7cc9" stroke-width="8"/><path d="M17 9 L23 3" stroke="#3aa0ee" stroke-width="1.5"/></svg>
<div style="left:763px;top:284px;width:127px;height:30px;background:#fdfdfd;border:1px solid #d0d0d0;border-bottom-color:#b4b4b4;border-radius:4px"></div>
<div class="t" style="left:793.20px;top:290.84px;font-size:12px;line-height:16.80px;color:#1a1a1a;font-weight:400;transform:scaleX(0.8856);transform-origin:0 0;">Weiter</div>
<svg style="left:766px;top:291px" width="24" height="16" viewBox="0 0 24 16"><path d="M2 2.5 L12 12.5 L22 2.5" fill="none" stroke="#1e96ee" stroke-width="4.2"/></svg>
<div style="left:763px;top:328px;width:127px;height:30px;background:#fdfdfd;border:1px solid #d0d0d0;border-bottom-color:#b4b4b4;border-radius:4px"></div>
<div class="t" style="left:804.80px;top:335.14px;font-size:12px;line-height:16.80px;color:#1a1a1a;font-weight:400;transform:scaleX(0.8409);transform-origin:0 0;">Büro-Info</div>
<div style="left:763px;top:366px;width:127px;height:30px;background:#fdfdfd;border:1px solid #d0d0d0;border-bottom-color:#b4b4b4;border-radius:4px"></div>
<div class="t" style="left:793.40px;top:373.04px;font-size:12px;line-height:16.80px;color:#1a1a1a;font-weight:400;transform:scaleX(0.8692);transform-origin:0 0;">Neuer KD-Auftrag</div>
<div style="left:826px;top:387px;width:7px;height:1px;background:#1a1a1a"></div>
<svg style="left:764px;top:367px" width="30" height="28" viewBox="0 0 30 28"><path d="M5 23 L16 11.5" stroke="#8e8e8e" stroke-width="5" stroke-linecap="round"/><circle cx="5.3" cy="22.7" r="1.5" fill="#fff"/><circle cx="19.8" cy="7.6" r="4.3" fill="none" stroke="#8e8e8e" stroke-width="3.4"/><path d="M19.6 7.8 L26 1.4" stroke="#fdfdfd" stroke-width="3.6"/><rect x="12.2" y="17" width="13.4" height="3.8" fill="#3aa812"/><rect x="16.9" y="12.6" width="4.2" height="12.6" fill="#3aa812"/></svg>
<div style="left:763px;top:406px;width:127px;height:30px;background:#fdfdfd;border:1px solid #d0d0d0;border-bottom-color:#b4b4b4;border-radius:4px"></div>
<div class="t" style="left:802.40px;top:413.04px;font-size:12px;line-height:16.80px;color:#1a1a1a;font-weight:400;transform:scaleX(0.8583);transform-origin:0 0;">Karteikarte</div>
<svg style="left:772px;top:408px" width="30" height="28" viewBox="0 0 30 28"><rect x="4" y="6" width="21.5" height="7.5" fill="#f9d46c"/><rect x="9.5" y="4" width="10.5" height="2.5" fill="#f5c31a"/><path d="M3.5 13 H26.5 L25 23.8 H5 Z" fill="#7f8b9b"/><rect x="3" y="13" width="24" height="2.6" fill="#6e7888"/></svg>
<div style="left:759px;top:504px;width:127px;height:30px;background:#fdfdfd;border:1px solid #d0d0d0;border-bottom-color:#b4b4b4;border-radius:4px"></div>
<div class="t" style="left:809.20px;top:511.04px;font-size:12px;line-height:16.80px;color:#1a1a1a;font-weight:400;transform:scaleX(0.8146);transform-origin:0 0;">Fertig</div>
<div style="left:1px;top:687px;width:119px;height:19px;background:#f4f4f4;border:1px solid #c8c8c8;border-bottom-color:#8e8e8e"></div>
<svg style="left:4px;top:688px" width="13" height="17" viewBox="0 0 13 17"><path d="M6 0.8 C9.2 0.8 11.2 3 11.2 6 C11.2 8.6 9.4 10.2 8.4 13 H3.6 C2.6 10.2 0.8 8.6 0.8 6 C0.8 3 2.8 0.8 6 0.8 Z" fill="#d447d4"/><ellipse cx="5.6" cy="6.2" rx="2.6" ry="3.2" fill="#f2a2f2"/><rect x="4" y="13" width="4" height="2.8" fill="#6aaeb0"/></svg>
<div class="t" style="left:21.20px;top:689.04px;font-size:12px;line-height:16.80px;color:#1a1a1a;font-weight:400;transform:scaleX(1.0155);transform-origin:0 0;">Hilfe und Kontakt</div>
<div style="left:121px;top:687px;width:74px;height:19px;background:#fff;border:1px solid #c8c8c8;border-bottom-color:#8e8e8e"></div>
<svg style="left:121px;top:689px" width="18" height="17" viewBox="0 0 18 17"><rect x="4.5" y="1.5" width="12.5" height="9.5" fill="#dcedfb" stroke="#3b8fd8" stroke-width="1"/><rect x="6" y="3" width="9.5" height="1.3" fill="#5aa5e6"/><rect x="0.8" y="6" width="13.7" height="9.7" fill="#f5c13c"/><rect x="1.5" y="7" width="6" height="1.4" fill="#fde7a6"/><rect x="1.5" y="9.2" width="4" height="1.2" fill="#fde7a6"/><rect x="8.6" y="8.6" width="5" height="6.6" fill="#fff" /><circle cx="11.1" cy="10.6" r="1.5" fill="#ee9a5c"/><rect x="9.2" y="12.3" width="3.8" height="2.6" fill="#ee9a5c"/></svg>
<div class="t" style="left:141.20px;top:689.04px;font-size:12px;line-height:16.80px;color:#1a1a1a;font-weight:400;transform:scaleX(0.9231);transform-origin:0 0;">LabelpX1</div>
<div style="left:196px;top:687px;width:64px;height:19px;background:#f0f0f0;border:1px solid #c8c8c8;border-bottom-color:#8e8e8e"></div>
<svg style="left:198px;top:689px" width="14" height="16" viewBox="0 0 14 16"><path d="M0.8 0.5 H9 L13.2 4.6 V15.3 H0.8 Z" fill="#f7df3e"/><path d="M9 0.5 V4.6 H13.2" fill="#e9c92a"/><path d="M2.5 3.5 H8 M2.5 6 H11 M2.5 8.5 H11 M2.5 11 H11 M2.5 13.3 H9" stroke="#cdb43a" stroke-width="0.9"/></svg>
<div class="t" style="left:215.80px;top:689.04px;font-size:12px;line-height:16.80px;color:#1a1a1a;font-weight:400;transform:scaleX(0.9545);transform-origin:0 0;">Spicker</div>
<div style="left:261px;top:687px;width:638px;height:19px;background:#f0f0f0;border:1px solid #a8a8a8"></div>
<div class="t" style="left:265.00px;top:689.04px;font-size:12px;line-height:16.80px;color:#9a9a9a;font-weight:400;transform:scaleX(0.9448);transform-origin:0 0;">V. 5.99.23.0811 - 32138 - Label Software Gerald Bax GmbH, Meisenstr. 73, 33607 Bielefeld</div>
<div style="left:911px;top:696px;width:2px;height:2px;background:#8a8a8a"></div>
<div style="left:907px;top:700px;width:2px;height:2px;background:#8a8a8a"></div>
<div style="left:911px;top:700px;width:2px;height:2px;background:#8a8a8a"></div>
<div style="left:903px;top:704px;width:2px;height:2px;background:#8a8a8a"></div>
<div style="left:907px;top:704px;width:2px;height:2px;background:#8a8a8a"></div>
<div style="left:911px;top:704px;width:2px;height:2px;background:#8a8a8a"></div>
</body></html>
